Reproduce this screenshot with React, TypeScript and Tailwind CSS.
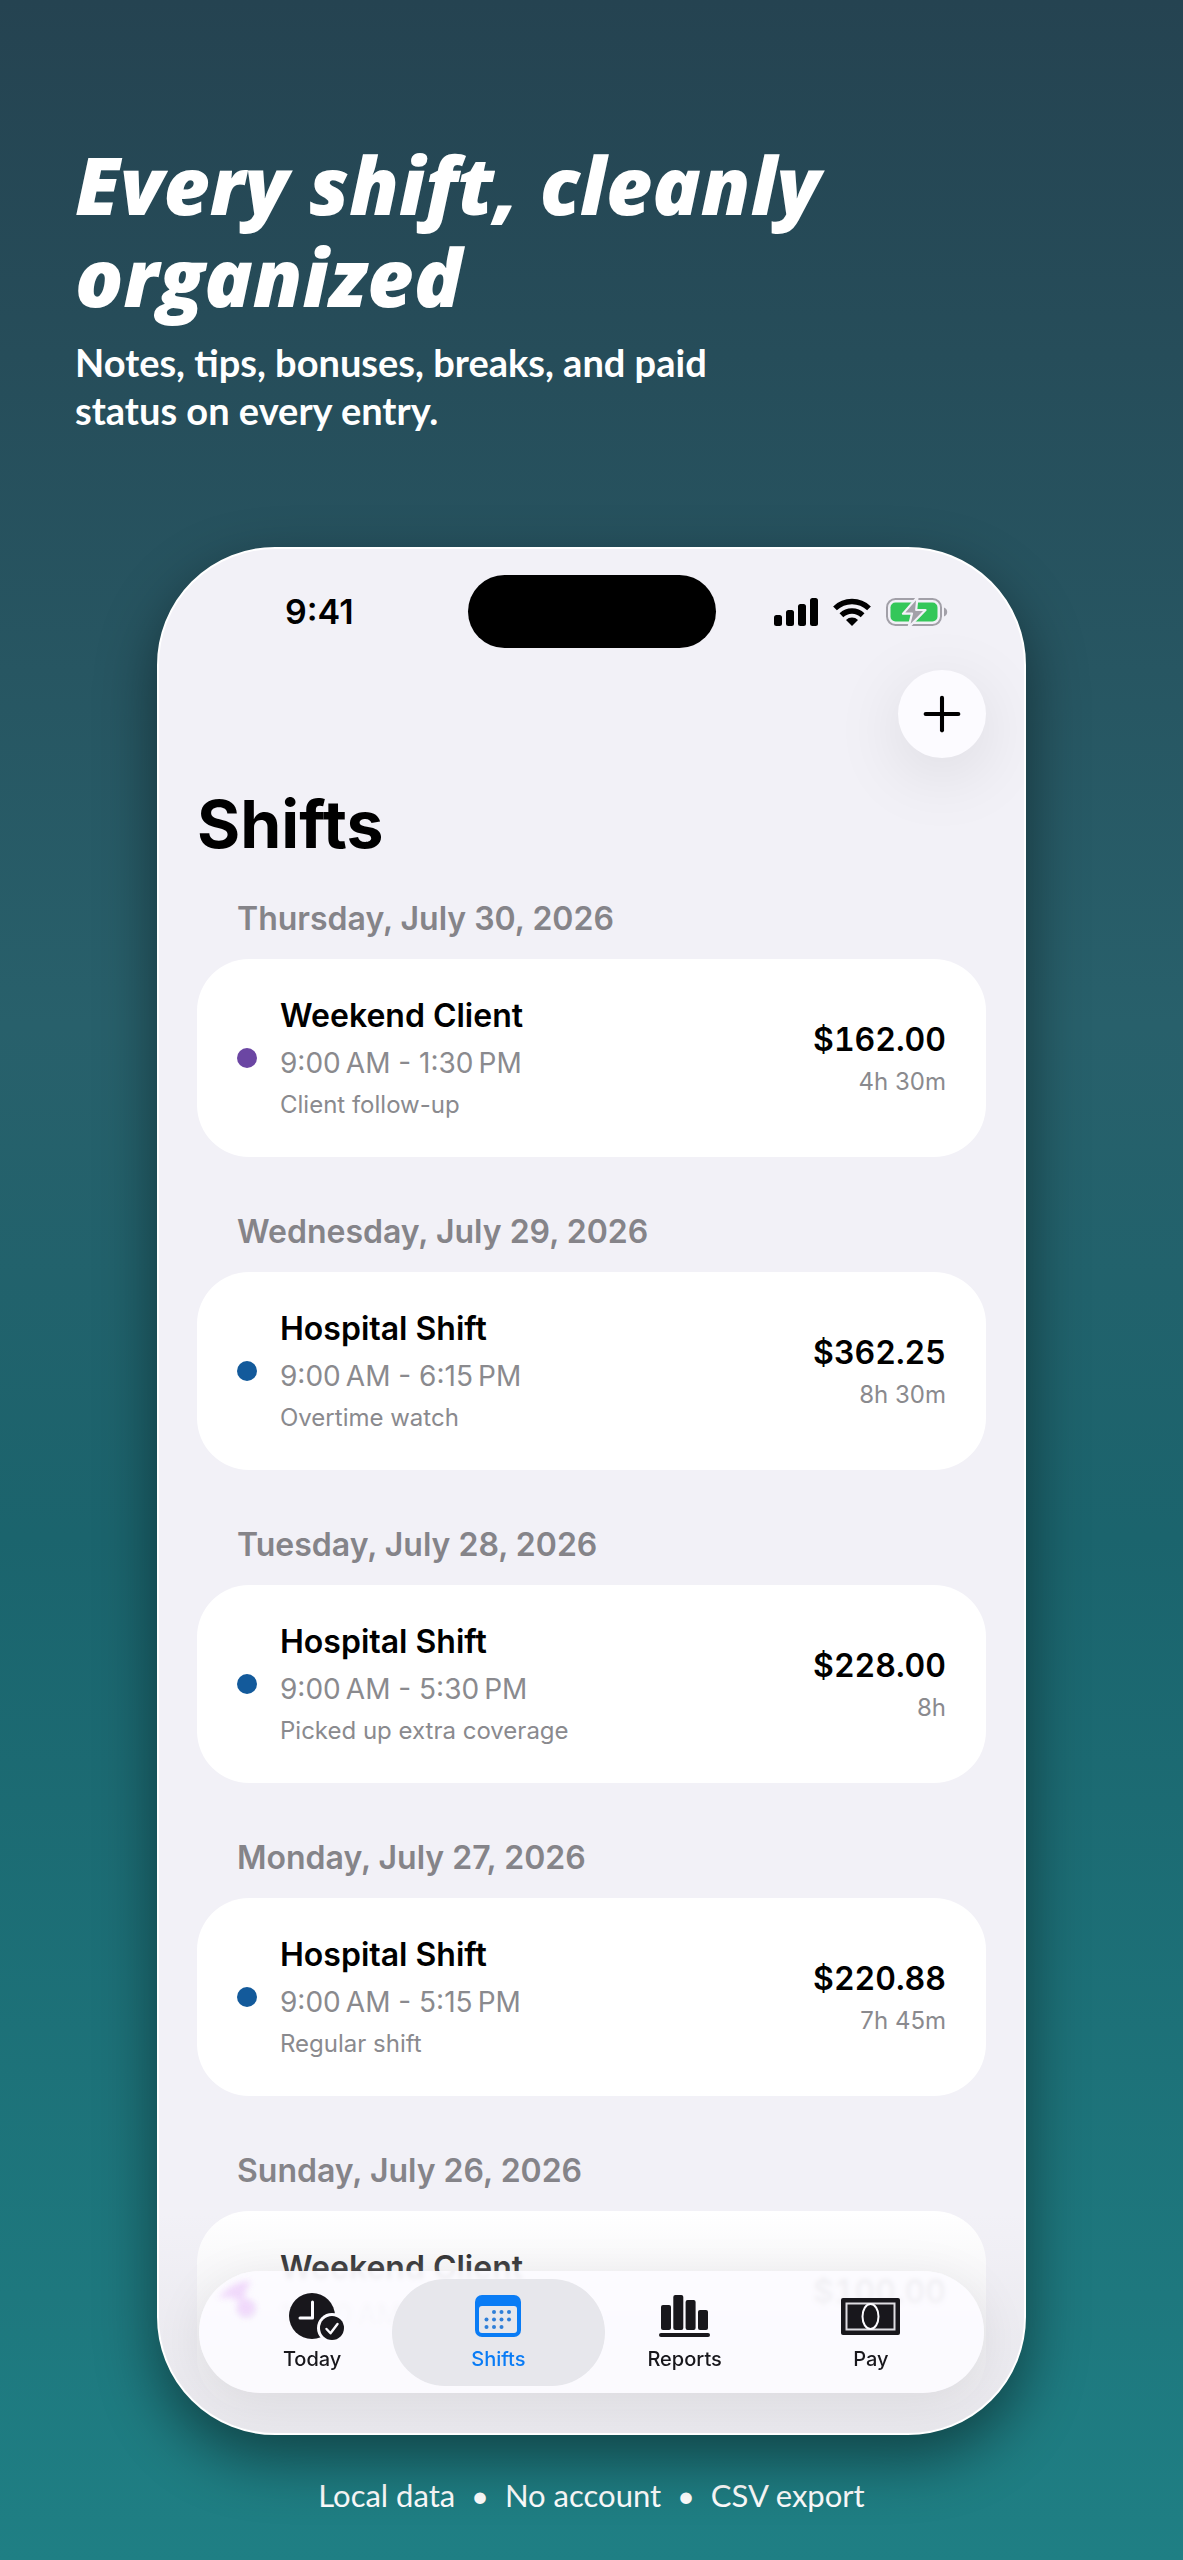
import { Plus } from "lucide-react";

type Shift = {
  day: string;
  job: string;
  hours: string;
  note?: string;
  pay: string;
  length?: string;
  color: string;
};

const shifts: Shift[] = [
  { day: "Thursday, July 30, 2026", job: "Weekend Client", hours: "9:00\u2009AM - 1:30\u2009PM", note: "Client follow-up", pay: "$162.00", length: "4h 30m", color: "bg-[#6b46a3]" },
  { day: "Wednesday, July 29, 2026", job: "Hospital Shift", hours: "9:00\u2009AM - 6:15\u2009PM", note: "Overtime watch", pay: "$362.25", length: "8h 30m", color: "bg-[#135a9b]" },
  { day: "Tuesday, July 28, 2026", job: "Hospital Shift", hours: "9:00\u2009AM - 5:30\u2009PM", note: "Picked up extra coverage", pay: "$228.00", length: "8h", color: "bg-[#135a9b]" },
  { day: "Monday, July 27, 2026", job: "Hospital Shift", hours: "9:00\u2009AM - 5:15\u2009PM", note: "Regular shift", pay: "$220.88", length: "7h 45m", color: "bg-[#135a9b]" },
  { day: "Sunday, July 26, 2026", job: "Weekend Client", hours: "10:00\u2009AM", pay: "$100.00", color: "bg-[#6b46a3]" },
];

function SignalIcon() {
  return (
    <svg className="h-7 w-11" viewBox="0 0 44 28" aria-hidden="true">
      <rect x="0" y="17" width="8" height="11" rx="2.5" />
      <rect x="12" y="12" width="8" height="16" rx="2.5" />
      <rect x="24" y="6" width="8" height="22" rx="2.5" />
      <rect x="36" y="0" width="8" height="28" rx="2.5" />
    </svg>
  );
}

function WifiIcon() {
  return (
    <svg className="h-7 w-[38px]" viewBox="0 0 38 28" fill="none" stroke="#000" strokeWidth="5.4" aria-hidden="true">
      <path d="M2 10.4a24.5 24.5 0 0 1 34 0" />
      <path d="M8.4 17.2a15.3 15.3 0 0 1 21.2 0" />
      <path d="M13 22a8.6 8.6 0 0 1 12 0l-6 6z" fill="#000" stroke="none" />
    </svg>
  );
}

function BatteryIcon() {
  return (
    <svg className="h-7 w-[62px]" viewBox="0 0 62 28" fill="none" aria-hidden="true">
      <rect x="1" y="1" width="54" height="26" rx="8.5" stroke="#a2a0a8" strokeWidth="2" />
      <rect x="4.5" y="4.5" width="47" height="19" rx="5" fill="#34c759" />
      <path d="M58 9.5c2 .6 3.2 2.3 3.2 4.5s-1.2 3.9-3.2 4.5z" fill="#a2a0a8" />
      <path d="M31.5-1L17 15.6h9L22.5 29.5 39.5 12h-9.3z" fill="#a2a0a8" stroke="#f2f1f7" strokeWidth="2.2" strokeLinejoin="round" />
    </svg>
  );
}

function TodayIcon() {
  return (
    <svg className="h-[46px] w-[46px] overflow-visible" viewBox="0 0 46 46" fill="none" aria-hidden="true">
      <circle cx="23" cy="23" r="23" fill="#18171c" />
      <path d="M23.5 9v16h-12.5" stroke="#fcfbff" strokeWidth="3" strokeLinecap="round" strokeLinejoin="round" />
      <circle cx="43" cy="35" r="15" fill="#fcfbff" />
      <circle cx="43" cy="35" r="12" fill="#18171c" />
      <path d="M37.5 36l4 4.3 7-9.3" stroke="#fcfbff" strokeWidth="2.4" strokeLinecap="round" strokeLinejoin="round" />
    </svg>
  );
}

const calendarDots = [
  [19, 17], [26.5, 17], [34, 17],
  [11.5, 24.5], [19, 24.5], [26.5, 24.5], [34, 24.5],
  [11.5, 32], [19, 32], [26.5, 32],
];

function ShiftsIcon() {
  return (
    <svg className="h-[42px] w-[46px]" viewBox="0 0 46 42" aria-hidden="true">
      <rect width="46" height="42" rx="7" fill="#0a7cf5" />
      <rect x="4" y="11" width="38" height="27" rx="3" fill="#e7e7ec" />
      {calendarDots.map(([x, y]) => (
        <circle key={`${x}-${y}`} cx={x} cy={y} r="2" fill="#2f7fd8" />
      ))}
    </svg>
  );
}

function ReportsIcon() {
  return (
    <svg className="h-[42px] w-[51px]" viewBox="0 0 51 42" fill="#18171c" aria-hidden="true">
      <rect x="2" y="10" width="10" height="25" rx="2" />
      <rect x="14.3" y="0" width="10" height="35" rx="2" />
      <rect x="26.6" y="5" width="10" height="30" rx="2" />
      <rect x="39" y="15" width="10" height="20" rx="2" />
      <rect x="0" y="38" width="51" height="4" rx="2" />
    </svg>
  );
}

function PayIcon() {
  return (
    <svg className="h-[37px] w-[59px]" viewBox="0 0 59 37" aria-hidden="true">
      <rect width="59" height="37" rx="2" fill="#18171c" />
      <rect x="5.5" y="5.5" width="48" height="26" fill="none" stroke="#dddce1" strokeWidth="2" />
      <ellipse cx="29.5" cy="18.5" rx="8" ry="12.5" fill="#18171c" stroke="#fcfbff" strokeWidth="2" />
    </svg>
  );
}

const tabs = [
  { label: "Today", Icon: TodayIcon },
  { label: "Shifts", Icon: ShiftsIcon, active: true },
  { label: "Reports", Icon: ReportsIcon },
  { label: "Pay", Icon: PayIcon },
];

function StatusBar() {
  return (
    <div className="grid h-[73px] grid-cols-[1fr_248px_1fr] items-center">
      <span className="pl-[88px] text-[34px] leading-[44px] font-semibold">9:41</span>
      <span className="h-full rounded-full bg-black" />
      <div className="flex items-center justify-end gap-[15px] pr-[38px]">
        <SignalIcon />
        <WifiIcon />
        <BatteryIcon />
      </div>
    </div>
  );
}

function ShiftCard({ shift }: { shift: Shift }) {
  return (
    <article className="flex h-[198px] items-center rounded-[52px] bg-white px-10">
      <span className={`h-5 w-5 shrink-0 rounded-full ${shift.color}`} />
      <div className="ml-[23px] flex-1">
        <h3 className="text-[32px] leading-[48px] font-semibold">{shift.job}</h3>
        <p className="text-[28px] leading-[46px] text-[#8a8a8e]">{shift.hours}</p>
        <p className="min-h-[38px] text-[24px] leading-[38px] text-[#8a8a8e]">{shift.note}</p>
      </div>
      <div className="text-right">
        <p className="text-[32px] leading-[48px] font-semibold tabular-nums">{shift.pay}</p>
        <p className="min-h-9 text-[24px] leading-9 text-[#8a8a8e]">{shift.length}</p>
      </div>
    </article>
  );
}

function TabBar() {
  return (
    <nav className="absolute inset-x-10 bottom-10 flex h-[122px] items-center overflow-hidden rounded-full bg-[#fcfbff]/93 px-5 shadow-[0_8px_50px_rgba(0,0,0,0.08)] backdrop-blur-[2px]">
      {/* job colour refracted through the glass */}
      <svg className="absolute top-2 left-4 h-10 w-12 blur-[3px]" viewBox="0 0 48 40" fill="#f0d9fb" aria-hidden="true">
        <path d="M3 20C12 8 22 2 36 2c-3 6-7 10-6 18l-8 2c-5-5-11-4-19-2z" />
        <circle cx="31" cy="29" r="9" />
      </svg>
      {tabs.map(({ label, Icon, active }) => (
        <button
          key={label}
          type="button"
          aria-current={active ? "page" : undefined}
          className={`relative -mx-[13px] flex h-[107px] flex-1 flex-col items-center justify-center gap-2 rounded-full ${active ? "bg-[#e7e7ec] text-[#0a7cf5]" : "text-[#18171c]"}`}
        >
          <span className="flex h-[46px] items-center"><Icon /></span>
          <span className="text-[20px] leading-6 font-medium">{label}</span>
        </button>
      ))}
    </nav>
  );
}

export default function App() {
  return (
    <main className="min-h-screen bg-[linear-gradient(to_bottom,#254351,#28606b_40%,#1b646d_60%,#1f7f84)] font-['Inter',sans-serif] text-black">
      <header className="px-[75px] pt-[138px] text-white">
        <h1 className="max-w-[860px] font-['Open_Sans',sans-serif] text-[80px] leading-[92px] font-extrabold italic">
          Every shift, cleanly organized
        </h1>
        <p className="mt-4 max-w-[700px] font-['Lato',sans-serif] text-[38px] leading-12 font-bold">
          Notes, tips, bonuses, breaks, and paid status on every entry.
        </p>
      </header>

      {/* phone */}
      <section className="relative mx-[157px] mt-[113px] overflow-hidden rounded-[118px] border-2 border-white bg-[#f2f1f7] px-[38px] pt-[26px] pb-6 shadow-[0_24px_60px_rgba(0,0,0,0.45)]">
        <StatusBar />
        <div className="mt-[22px] flex justify-end">
          <button type="button" aria-label="Add shift" className="flex h-[88px] w-[88px] items-center justify-center rounded-full bg-[#fcfbff] shadow-[0_16px_70px_rgba(0,0,0,0.1)]">
            <Plus className="h-14 w-14" strokeWidth={1.75} />
          </button>
        </div>
        <h2 className="mt-[26px] text-[66px] leading-[80px] font-bold">Shifts</h2>

        <div className="mt-[31px] flex flex-col gap-[51px]">
          {shifts.map((s) => (
            <div key={s.day}>
              <p className="mb-4 pl-10 text-[32px] leading-[48px] font-semibold text-[#858489]">{s.day}</p>
              <ShiftCard shift={s} />
            </div>
          ))}
        </div>

        {/* fade behind the tab bar */}
        <div className="absolute inset-x-0 bottom-0 h-[220px] bg-linear-to-b from-[#e9e8ed]/0 via-[#e9e8ed]/60 to-[#e9e8ed]" />
        <TabBar />
      </section>

      <footer className="pt-9 pb-10 text-center font-['Lato',sans-serif] text-[31px] leading-12 text-white">
        Local data&nbsp; •&nbsp; No account&nbsp; •&nbsp; CSV export
      </footer>
    </main>
  );
}
